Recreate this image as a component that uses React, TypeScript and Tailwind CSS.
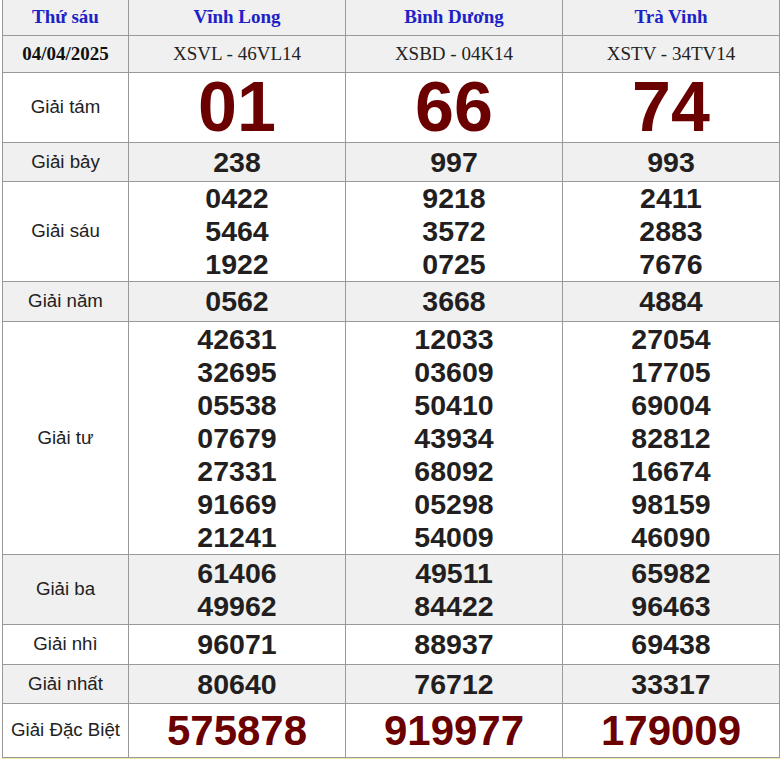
import React from "react";

type Prize = {
  label: string;
  height: string;
  shaded: boolean;
  kind: "tam" | "normal" | "db";
  values: string[][];
};

const provinces = [
  { name: "Vĩnh Long", code: "XSVL - 46VL14" },
  { name: "Bình Dương", code: "XSBD - 04K14" },
  { name: "Trà Vinh", code: "XSTV - 34TV14" },
];

const prizes: Prize[] = [
  { label: "Giải tám", height: "h-[69px]", shaded: false, kind: "tam", values: [["01"], ["66"], ["74"]] },
  { label: "Giải bảy", height: "h-[38px]", shaded: true, kind: "normal", values: [["238"], ["997"], ["993"]] },
  {
    label: "Giải sáu",
    height: "h-[99px]",
    shaded: false,
    kind: "normal",
    values: [
      ["0422", "5464", "1922"],
      ["9218", "3572", "0725"],
      ["2411", "2883", "7676"],
    ],
  },
  { label: "Giải năm", height: "h-[39px]", shaded: true, kind: "normal", values: [["0562"], ["3668"], ["4884"]] },
  {
    label: "Giải tư",
    height: "h-[232px]",
    shaded: false,
    kind: "normal",
    values: [
      ["42631", "32695", "05538", "07679", "27331", "91669", "21241"],
      ["12033", "03609", "50410", "43934", "68092", "05298", "54009"],
      ["27054", "17705", "69004", "82812", "16674", "98159", "46090"],
    ],
  },
  {
    label: "Giải ba",
    height: "h-[69px]",
    shaded: true,
    kind: "normal",
    values: [
      ["61406", "49962"],
      ["49511", "84422"],
      ["65982", "96463"],
    ],
  },
  { label: "Giải nhì", height: "h-[39px]", shaded: false, kind: "normal", values: [["96071"], ["88937"], ["69438"]] },
  { label: "Giải nhất", height: "h-[38px]", shaded: true, kind: "normal", values: [["80640"], ["76712"], ["33317"]] },
  { label: "Giải Đặc Biệt", height: "h-[53px]", shaded: false, kind: "db", values: [["575878"], ["919977"], ["179009"]] },
];

const serif = "font-['Liberation_Serif',serif]";
const sans = "font-['Liberation_Sans',Arial,sans-serif]";

function NumberCell({ nums, kind, bg }: { nums: string[]; kind: Prize["kind"]; bg: string }) {
  let cls = "text-[28.5px] leading-[33px] text-[#231f20]";
  if (kind === "tam") cls = "text-[70px] leading-[69px] text-[#6b0000]";
  if (kind === "db") cls = "text-[42px] leading-[48px] text-[#6b0000]";
  return (
    <div className={`${bg} flex flex-col items-center justify-center font-bold ${sans}`}>
      {nums.map((n, i) => (
        <div key={i} className={cls}>
          {n}
        </div>
      ))}
    </div>
  );
}

export default function App() {
  return (
    <div className="bg-white min-h-[759px]">
      <div className="ml-[2px] w-[778px] bg-[#999999] px-px pb-px">
        <div className="grid grid-cols-[125px_216px_216px_216px] gap-px">
          {/* header */}
          <div className={`h-[35px] bg-[#f0f0f0] flex items-center justify-center ${serif} font-bold text-[19px] text-[#1d22c6]`}>
            Thứ sáu
          </div>
          {provinces.map((p) => (
            <div
              key={p.name}
              className={`h-[35px] bg-[#f0f0f0] flex items-center justify-center ${serif} font-bold text-[19px] text-[#1d22c6]`}
            >
              {p.name}
            </div>
          ))}

          <div className={`h-[36px] bg-[#f0f0f0] flex items-center justify-center ${serif} font-bold text-[19px] text-[#111]`}>
            04/04/2025
          </div>
          {provinces.map((p) => (
            <div
              key={p.code}
              className={`h-[36px] bg-[#f0f0f0] flex items-center justify-center ${serif} text-[19px] text-[#222]`}
            >
              {p.code}
            </div>
          ))}

          {prizes.map((row) => {
            const bg = row.shaded ? "bg-[#f0f0f0]" : "bg-white";
            return (
              <React.Fragment key={row.label}>
                <div className={`${row.height} ${bg} flex items-center justify-center ${sans} text-[18.7px] text-[#222]`}>
                  {row.label}
                </div>
                {row.values.map((nums, i) => (
                  <NumberCell key={i} nums={nums} kind={row.kind} bg={`${row.height} ${bg}`} />
                ))}
              </React.Fragment>
            );
          })}
        </div>
      </div>
      <div className="ml-[2px] w-[778px] h-px bg-[#efe5a8]" />
    </div>
  );
}
